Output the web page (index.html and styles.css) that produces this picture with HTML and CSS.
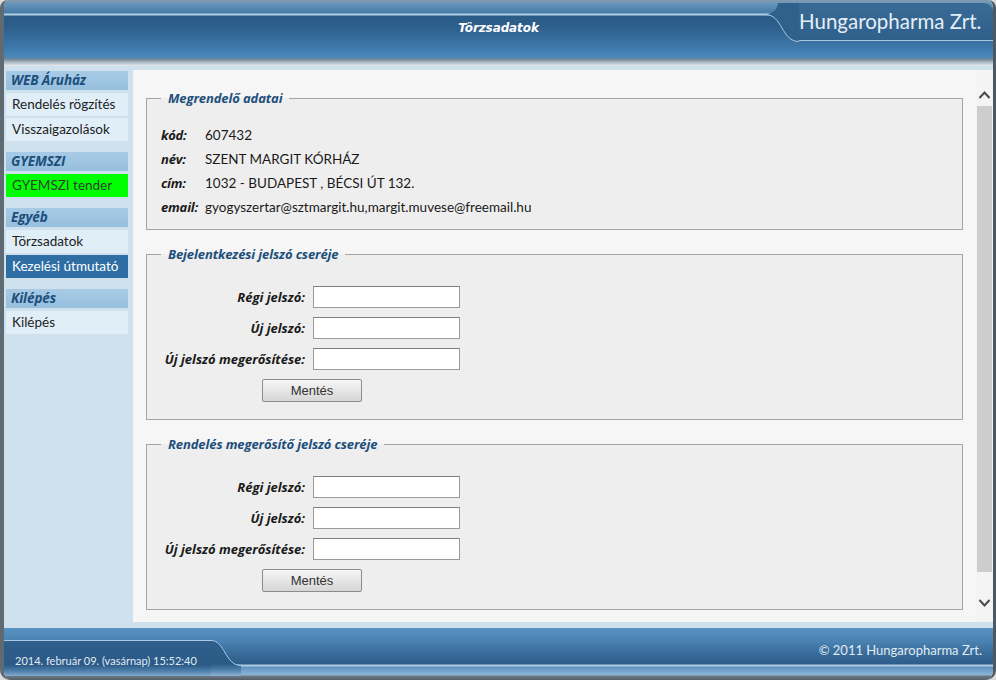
FILE: index.html
```html
<!DOCTYPE html>
<html lang="hu">
<head>
<meta charset="utf-8">
<title>Törzsadatok</title>
<link rel="stylesheet" href="styles.css">
</head>
<body>
<div class="window">
  <header class="header">
    <div class="h-side"></div>
    <div class="h-title">Törzsadatok</div>
    <div class="h-right">
      <div class="tab">
        <svg class="tab-curve" width="34" height="39" viewBox="0 0 34 39">
          <path d="M0 11.5 C18 11.5 16 38.5 34 38.5 L34 0 L13 0 C12 8 6 11.5 0 11.5 Z" fill="#30608c"/>
          <path d="M0 11.5 C18 11.5 16 38.5 34 38.5" stroke="#a9c9e4" stroke-width="1" fill="none"/>
        </svg>
        <div class="tab-body">Hungaropharma Zrt.</div>
      </div>
    </div>
  </header>

  <div class="middle">
    <nav class="sidebar">
      <div class="side-section">
        <div class="side-head">WEB Áruház</div>
        <div class="side-item">Rendelés rögzítés</div>
        <div class="side-item">Visszaigazolások</div>
      </div>
      <div class="side-section">
        <div class="side-head">GYEMSZI</div>
        <div class="side-item green">GYEMSZI tender</div>
      </div>
      <div class="side-section">
        <div class="side-head">Egyéb</div>
        <div class="side-item">Törzsadatok</div>
        <div class="side-item active">Kezelési útmutató</div>
      </div>
      <div class="side-section">
        <div class="side-head">Kilépés</div>
        <div class="side-item">Kilépés</div>
      </div>
    </nav>

    <main class="main">
      <div class="content">
        <fieldset class="box info">
          <legend>Megrendelő adatai</legend>
          <div class="info-grid">
            <span class="lbl">kód:</span><span>607432</span>
            <span class="lbl">név:</span><span>SZENT MARGIT KÓRHÁZ</span>
            <span class="lbl">cím:</span><span>1032 - BUDAPEST , BÉCSI ÚT 132.</span>
            <span class="lbl">email:</span><span>gyogyszertar@sztmargit.hu,margit.muvese@freemail.hu</span>
          </div>
        </fieldset>

        <fieldset class="box pw">
          <legend>Bejelentkezési jelszó cseréje</legend>
          <div class="pw-grid">
            <label class="plbl">Régi jelszó:</label><input type="password" class="inp">
            <label class="plbl">Új jelszó:</label><input type="password" class="inp">
            <label class="plbl">Új jelszó megerősítése:</label><input type="password" class="inp">
          </div>
          <div class="btn-row"><button class="btn">Mentés</button></div>
        </fieldset>

        <fieldset class="box pw">
          <legend>Rendelés megerősítő jelszó cseréje</legend>
          <div class="pw-grid">
            <label class="plbl">Régi jelszó:</label><input type="password" class="inp">
            <label class="plbl">Új jelszó:</label><input type="password" class="inp">
            <label class="plbl">Új jelszó megerősítése:</label><input type="password" class="inp">
          </div>
          <div class="btn-row"><button class="btn">Mentés</button></div>
        </fieldset>
      </div>
      <div class="scroll">
        <div class="arrow">
          <svg width="17" height="18" viewBox="0 0 17 18"><path d="M3.5 12 L8.5 6.5 L13.5 12" stroke="#4a4a4a" stroke-width="2" fill="none"/></svg>
        </div>
        <div class="thumb"></div>
        <div class="track"></div>
        <div class="arrow">
          <svg width="17" height="18" viewBox="0 0 17 18"><path d="M3.5 6 L8.5 11.5 L13.5 6" stroke="#4a4a4a" stroke-width="2" fill="none"/></svg>
        </div>
      </div>
    </main>
  </div>

  <footer class="footer">
    <div class="f-tab">2014. február 09. (vasárnap) 15:52:40</div>
    <svg class="f-curve" width="30" height="36" viewBox="0 0 30 36">
      <defs>
        <linearGradient id="ftab" x1="0" y1="0" x2="0" y2="1">
          <stop offset="0" stop-color="#2f5f8c"/>
          <stop offset="0.66" stop-color="#2c5a87"/>
          <stop offset="0.83" stop-color="#4e7fab"/>
          <stop offset="1" stop-color="#8fb4d4"/>
        </linearGradient>
      </defs>
      <path d="M0 0.5 C14 0.5 14 25.5 30 25.5 L30 36 L0 36 Z" fill="url(#ftab)"/>
      <path d="M0 0.5 C14 0.5 14 25.5 30 25.5" stroke="#a9c9e4" stroke-width="1" fill="none"/>
    </svg>
    <div class="f-right">© 2011 Hungaropharma Zrt.</div>
  </footer>
</div>
</body>
</html>
```

FILE: styles.css
```css
html, body {
  margin: 0;
  padding: 0;
  background: #dcdcdc;
}

body {
  font-family: Lato, "Noto Sans", sans-serif;
  font-size: 13px;
  color: #1a1a1a;
}

.window {
  width: 996px;
  height: 680px;
  box-sizing: border-box;
  border-left: 4px solid #5f6a73;
  border-right: 3px solid #4e5861;
  border-radius: 8px 8px 10px 10px;
  overflow: hidden;
  display: flex;
  flex-direction: column;
  background: #cfe1ed;
}

/* ---------- header ---------- */
.header {
  height: 66px;
  flex: none;
  display: grid;
  grid-template-columns: 1fr auto 1fr;
  background: linear-gradient(to bottom,
    #7d99b1 0, #7d99b1 2px,
    #6896bc 3px, #477aa6 13px,
    #b2cfe7 14px, #b2cfe7 15px,
    #2b5a86 16px, #2e608e 28px,
    #3f79ab 48px, #4a88bb 57px,
    #6f8596 59px, #a9b6c1 62px, #e6eaee 66px);
}

.h-title {
  grid-column: 2;
  align-self: start;
  padding-top: 21px;
  font-family: "DejaVu Sans", Verdana, sans-serif;
  font-weight: bold;
  font-style: italic;
  font-size: 12px;
  color: #ffffff;
  letter-spacing: -0.1px;
}

.h-right {
  grid-column: 3;
  display: flex;
  justify-content: flex-end;
  align-items: flex-start;
  padding-top: 3px;
}

.tab {
  display: flex;
  height: 39px;
}

.tab-curve {
  display: block;
  flex: none;
}

.tab-body {
  width: 194px;
  height: 38px;
  box-sizing: border-box;
  background: linear-gradient(to bottom, #3a6a96 0, #2f5f8b 100%);
  border-bottom: 1px solid #a9c9e4;
  border-top-right-radius: 9px;
  font-size: 20.5px;
  line-height: 37px;
  color: #e4eef6;
  white-space: nowrap;
}

/* ---------- middle ---------- */
.middle {
  flex: 1;
  display: flex;
  min-height: 0;
}

.sidebar {
  width: 129px;
  flex: none;
  box-sizing: border-box;
  padding: 5px 5px 0 2px;
  background: #cfe1ed;
}

.side-section {
  display: flex;
  flex-direction: column;
  gap: 2px;
  margin-bottom: 11px;
}

.side-head {
  height: 19px;
  line-height: 19px;
  margin-bottom: 1px;
  padding-left: 5px;
  background: linear-gradient(to bottom, #a7cbe6, #96bfde);
  color: #1d4f7c;
  font-family: "Open Sans", Lato, sans-serif;
  font-weight: bold;
  font-style: italic;
  font-size: 13.5px;
  letter-spacing: -0.1px;
}

.side-item {
  height: 23px;
  line-height: 23px;
  padding-left: 6px;
  background: #e0eef8;
  color: #222222;
  font-size: 13.5px;
  white-space: nowrap;
}

.side-item.green {
  background: #00ff00;
  color: #2f3f2f;
}

.side-item.active {
  background: #2f6ea5;
  color: #ffffff;
}

.main {
  flex: 1;
  display: flex;
  background: #f6f6f6;
  margin: 4px 0 6px 0;
}

.content {
  flex: 1;
  padding: 20px 13px 0 13px;
  font-size: 13.5px;
}

/* ---------- fieldsets ---------- */
.box {
  margin: 0 0 16px 0;
  padding: 0 14px 10px 14px;
  border: 1px solid #a5a5a5;
  background: #eeeeee;
}

.box legend {
  padding: 0 7px;
  line-height: 16px;
  font-family: "Open Sans", Lato, sans-serif;
  font-weight: bold;
  font-style: italic;
  font-size: 13px;
  letter-spacing: -0.1px;
  color: #1d4f7c;
}

.info {
  padding-top: 17px;
  padding-bottom: 10px;
}

.info-grid {
  display: grid;
  grid-template-columns: 40px 1fr;
  column-gap: 4px;
  grid-auto-rows: 24px;
  align-items: center;
}

.lbl {
  font-family: "Open Sans", Lato, sans-serif;
  font-weight: bold;
  font-style: italic;
  font-size: 13px;
  letter-spacing: -0.2px;
}

.pw {
  padding-top: 24px;
  padding-bottom: 17px;
}

.pw-grid {
  display: grid;
  grid-template-columns: 144px 147px;
  column-gap: 8px;
  row-gap: 9px;
  align-items: center;
}

.plbl {
  text-align: right;
  font-family: "Open Sans", Lato, sans-serif;
  font-weight: bold;
  font-style: italic;
  font-size: 13px;
  white-space: nowrap;
}

.inp {
  width: 147px;
  height: 22px;
  box-sizing: border-box;
  margin: 0;
  border: 1px solid #9a9a9a;
  border-top-color: #7f7f7f;
  background: #ffffff;
  padding: 0 3px;
}

.btn-row {
  margin-top: 9px;
  padding-left: 101px;
}

.btn {
  display: block;
  width: 100px;
  height: 23px;
  margin: 0;
  padding: 0;
  border: 1px solid #8c8c8c;
  border-radius: 2px;
  background: linear-gradient(to bottom, #f6f6f6 0, #e6e6e6 50%, #d6d6d6 100%);
  font-family: "Liberation Sans", Arial, sans-serif;
  font-size: 13px;
  color: #333333;
}

/* ---------- scrollbar ---------- */
.scroll {
  width: 17px;
  flex: none;
  display: flex;
  flex-direction: column;
  padding: 16px 0 10px 0;
  background: #f4f4f4;
}

.arrow {
  height: 18px;
  flex: none;
}

.arrow svg {
  display: block;
}

.thumb {
  height: 466px;
  margin: 2px 1px 0 1px;
  background: #cdcdcd;
  flex: none;
}

.track {
  flex: 1;
}

/* ---------- footer ---------- */
.footer {
  height: 52px;
  flex: none;
  display: flex;
  align-items: flex-start;
  background: linear-gradient(to bottom,
    #5a93c2 0, #4b84b4 12px,
    #3a6e9c 24px, #2d5d8a 36px,
    #aecbe4 37px, #aecbe4 38px,
    #5f92be 39px, #8db6d8 47px,
    #6c7984 48px, #555f68 52px);
}

.f-tab {
  width: 207px;
  height: 36px;
  box-sizing: border-box;
  margin-top: 12px;
  padding-left: 11px;
  padding-top: 13px;
  border-top: 1px solid #a9c9e4;
  background: linear-gradient(to bottom, #2f5f8c 0, #2c5a87 24px, #4e7fab 30px, #8fb4d4 36px);
  color: #e0ebf4;
  font-size: 11px;
  white-space: nowrap;
}

.f-curve {
  display: block;
  flex: none;
  margin-top: 12px;
}

.f-right {
  flex: 1;
  text-align: right;
  padding-right: 11px;
  padding-top: 14px;
  color: #e0ebf4;
  font-size: 13px;
  white-space: nowrap;
}
```
